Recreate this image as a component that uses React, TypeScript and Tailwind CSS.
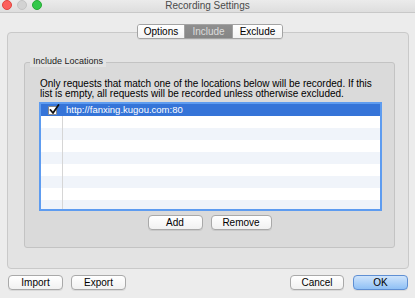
import React from "react";

const font = { fontFamily: '"Liberation Sans", Arial, sans-serif' };

function Btn({ label, w, primary }: { label: string; w: string; primary?: boolean }) {
  return (
    <div
      className={
        "h-[15px] flex items-center justify-center rounded-[4px] border text-[10px] leading-none text-black shadow-[0_1px_0_rgba(0,0,0,0.08)] " +
        w +
        (primary
          ? " border-[#5f8fd3] bg-gradient-to-b from-[#cfe4fb] to-[#8fc0f5]"
          : " border-[#a9a9a9] bg-gradient-to-b from-[#ffffff] to-[#f1f1f1]")
      }
    >
      {label}
    </div>
  );
}

function Check() {
  return (
    <div className="relative w-[9px] h-[9px] bg-white border border-[#8a8a8a] rounded-[1px]">
      <svg className="absolute left-[0px] top-[-3px]" width="11" height="11" viewBox="0 0 11 11">
        <path d="M1.5 6 L4 9 L9.5 1" fill="none" stroke="#111" strokeWidth="1.8" strokeLinecap="round" strokeLinejoin="round" />
      </svg>
    </div>
  );
}

export default function App() {
  const rows = Array.from({ length: 8 });
  return (
    <div className="w-[415px] h-[298px] bg-[#ececec] flex flex-col overflow-hidden" style={font}>
      {/* title bar */}
      <div className="relative h-[13px] shrink-0 bg-gradient-to-b from-[#ebebeb] to-[#dedede] border-b border-[#c8c8c8] flex items-center justify-center">
        <div className="absolute left-[2px] top-[0px] flex gap-[5px]">
          <div className="w-[10px] h-[10px] rounded-full bg-[#fc605c] border border-[#e0443e]" />
          <div className="w-[10px] h-[10px] rounded-full bg-[#d3d3d3] border border-[#c4c4c4]" />
          <div className="w-[10px] h-[10px] rounded-full bg-[#34c84a] border border-[#27aa35]" />
        </div>
        <span className="text-[10px] leading-none text-[#4a4a4a] -mt-[1px]">Recording Settings</span>
      </div>

      {/* body */}
      <div className="flex-1 flex flex-col pl-[7px] pr-[6px] pt-[11px]">
        {/* tabs */}
        <div className="relative z-10 flex justify-center pl-[4px]">
          <div className="flex h-[15px] rounded-[3px] border border-[#a3a3a3] overflow-hidden shadow-[0_1px_0_rgba(0,0,0,0.06)] text-[10px] leading-none">
            <div className="w-[47px] flex items-center justify-center bg-gradient-to-b from-white to-[#f3f3f3] text-black border-r border-[#a3a3a3]">Options</div>
            <div className="w-[48px] flex items-center justify-center bg-gradient-to-b from-[#8f8f8f] to-[#858585] text-[#dcdcdc] border-r border-[#a3a3a3]">Include</div>
            <div className="w-[49px] flex items-center justify-center bg-gradient-to-b from-white to-[#f3f3f3] text-black">Exclude</div>
          </div>
        </div>

        {/* panel */}
        <div className="-mt-[7px] h-[237px] rounded-[4px] border border-[#c9c9c9] bg-[#e3e3e3] pt-[29px] pl-[16px] pr-[13px]">
          {/* group box */}
          <div className="relative h-[186px] rounded-[3px] border border-[#c3c3c3] bg-[#dadada] pt-[16px] pl-[14px] pr-[12px]">
            <div className="absolute left-[5px] -top-[7px] px-[3px] bg-[#e3e3e3] text-[9px] leading-[11px] text-[#222]">Include Locations</div>
            <p className="pl-[1px] text-[10px] leading-[10px] text-black">
              Only requests that match one of the locations below will be recorded. If this list is empty, all requests will be recorded unless otherwise excluded.
            </p>
            <div className="mt-[3px] h-[109px] border-2 border-[#5e9cf0] bg-white overflow-hidden relative">
              <div className="absolute left-[21px] top-0 bottom-0 w-px bg-[#d6d6d6]" />
              <div className="h-[12px] bg-[#3574d8] flex items-center relative">
                <div className="w-[22px] flex justify-center pl-[1px]"><Check /></div>
                <span className="pl-[3px] text-[9.5px] leading-none text-white">http://fanxing.kugou.com:80</span>
              </div>
              {rows.map((_, i) => (
                <div key={i} className={"h-[12px] " + (i % 2 === 1 ? "bg-[#f0f4fa]" : "bg-white")} />
              ))}
            </div>
            <div className="mt-[4px] flex justify-center gap-[8px] pr-[2px]">
              <Btn label="Add" w="w-[55px]" />
              <Btn label="Remove" w="w-[61px]" />
            </div>
          </div>
        </div>

        {/* bottom buttons */}
        <div className="mt-[6px] flex items-center px-[1px]">
          <div className="flex gap-[8px]">
            <Btn label="Import" w="w-[55px]" />
            <Btn label="Export" w="w-[55px]" />
          </div>
          <div className="ml-auto flex gap-[9px]">
            <Btn label="Cancel" w="w-[54px]" />
            <Btn label="OK" w="w-[55px]" primary />
          </div>
        </div>
      </div>
    </div>
  );
}
